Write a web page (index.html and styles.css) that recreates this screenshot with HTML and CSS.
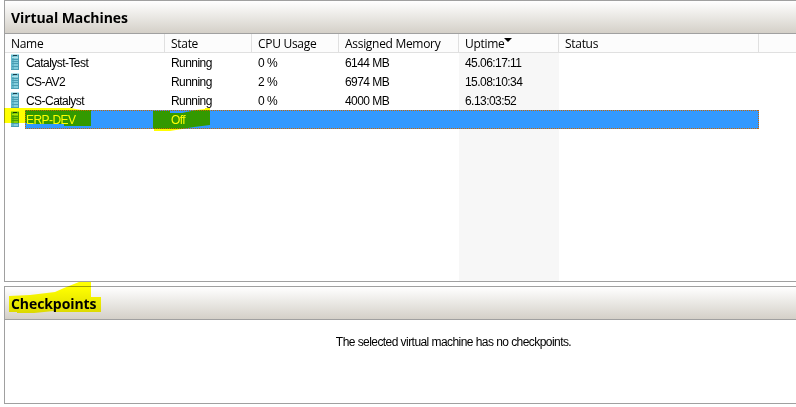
FILE: index.html
```html
<!DOCTYPE html>
<html lang="en">
<head>
  <meta charset="UTF-8">
  <title>Virtual Machines</title>
  <meta name="viewport" content="width=device-width, initial-scale=1">
  <link rel="stylesheet" href="styles.css">
</head>
<body>

  <!-- Server icon, reused by every row -->
  <svg class="sprite" width="0" height="0" aria-hidden="true">
    <symbol id="server" viewBox="0 0 8 16">
      <path fill="#62b8cb" d="M0 0h8v16H0z"/>
      <path fill="#83cddb" d="M3 2h4v13H3z"/>
      <path fill="#4a9db3" d="M7 1h1v15H7zM0 15h8v1H0z"/>
      <path fill="#b5e2ea" d="M0 0h8v1H0zM1 3h6v1H1z"/>
      <path fill="#4a9db3" d="M1 5h6v1H1zM1 7h6v1H1zM1 9h6v1H1zM1 12h6v1H1z"/>
      <path fill="#163c4c" d="M2 1h4v1H2z"/>
    </symbol>
  </svg>

  <section class="panel panel-machines">
    <h2 class="panel-title">Virtual Machines</h2>
    <div class="list">
      <div class="row row-head">
        <span class="cell">Name</span>
        <span class="cell">State</span>
        <span class="cell">CPU Usage</span>
        <span class="cell">Assigned Memory</span>
        <span class="cell">Uptime<i class="sort-arrow"></i></span>
        <span class="cell">Status</span>
      </div>
      <div class="row">
        <span class="cell cell-name"><svg class="icon"><use href="#server"/></svg>Catalyst-Test</span>
        <span class="cell">Running</span>
        <span class="cell">0 %</span>
        <span class="cell">6144 MB</span>
        <span class="cell">45.06:17:11</span>
      </div>
      <div class="row">
        <span class="cell cell-name"><svg class="icon"><use href="#server"/></svg>CS-AV2</span>
        <span class="cell">Running</span>
        <span class="cell">2 %</span>
        <span class="cell">6974 MB</span>
        <span class="cell">15.08:10:34</span>
      </div>
      <div class="row">
        <span class="cell cell-name"><svg class="icon"><use href="#server"/></svg>CS-Catalyst</span>
        <span class="cell">Running</span>
        <span class="cell">0 %</span>
        <span class="cell">4000 MB</span>
        <span class="cell">6.13:03:52</span>
      </div>
      <div class="row is-selected">
        <span class="cell cell-name"><svg class="icon"><use href="#server"/></svg>ERP-DEV</span>
        <span class="cell">Off</span>
      </div>
    </div>
  </section>

  <section class="panel panel-checkpoints">
    <h2 class="panel-title">Checkpoints</h2>
    <p class="message">The selected virtual machine has no checkpoints.</p>
  </section>

  <!-- Marker strokes over the list -->
  <svg class="marker" viewBox="0 0 796 407" aria-hidden="true">
    <path d="M4 108H70L82 110H91V126H64V124H27V123H4z"/>
    <path d="M153 111H170V113H182L196 110L205 109V108H210V125L194 127L170 131H154V128H153z"/>
    <path d="M9 296L30 295L55 292L64 288L79 282H91V297H101V312H54V311L34 313H17V312H9z"/>
  </svg>

</body>
</html>
```

FILE: styles.css
```css
* {
  box-sizing: border-box;
}

body {
  position: relative;
  display: flex;
  flex-direction: column;
  gap: 4px;
  height: 407px;
  margin: 0;
  padding-left: 4px;
  overflow: hidden;
  background-color: #fff;
  color: #000;
  font: 12px/19px "Open Sans", "Noto Sans", sans-serif;
}

.sprite {
  position: absolute;
}

.panel {
  display: flex;
  flex-direction: column;
  border: 1px solid #a0a0a0;
  border-right: 0;
}
.panel-machines {
  height: 282px;
}
.panel-checkpoints {
  height: 118px;
}

.panel-title {
  flex: none;
  height: 33px;
  margin: 0;
  padding-left: 6px;
  border-bottom: 1px solid #a0a0a0;
  background: linear-gradient(to bottom, #fff, #d4d0c8);
  font-size: 14px;
  letter-spacing: -.08px;
  line-height: 33px;
}

/* The sorted column is shaded down to the bottom of the list */
.list {
  flex: 1;
  background: linear-gradient(#f7f7f7, #f7f7f7) 454px 19px / 100px 100% no-repeat;
}

.row {
  display: grid;
  grid-template-columns: 160px 87px 87px 120px 100px 200px;
  height: 19px;
  font-family: "Liberation Sans", Arial, sans-serif;
  letter-spacing: -.55px;
  line-height: 21px;
}
.row-head {
  border-bottom: 1px solid #e0e0e0;
  background-color: #fcfcfc;
  font-family: "Open Sans", "Noto Sans", sans-serif;
  letter-spacing: -.3px;
  line-height: 19px;
}

.cell {
  padding-left: 6px;
  white-space: nowrap;
}
.row-head .cell {
  border-right: 1px solid #e0e0e0;
}

.cell-name {
  display: flex;
}
.icon {
  width: 8px;
  height: 16px;
  margin: 1px 7px 0 0;
}

.sort-arrow {
  display: inline-block;
  border: 4px solid transparent;
  border-top-color: #000;
  border-bottom: 0;
  vertical-align: 6px;
}

.is-selected {
  position: relative;
  width: 754px;
  background: linear-gradient(#39f, #39f) 20px 0 no-repeat;
  color: #fff;
}
/* Focus rectangle, one pixel on and one off, leaves the icon out */
.is-selected::after {
  content: "";
  position: absolute;
  top: 0;
  right: 0;
  bottom: 0;
  left: 20px;
  background:
    linear-gradient(to right, #c60 50%, transparent 50%) 0 0 / 2px 1px repeat-x,
    linear-gradient(to right, #c60 50%, transparent 50%) 0 100% / 2px 1px repeat-x,
    linear-gradient(to bottom, #c60 50%, transparent 50%) 0 0 / 1px 2px repeat-y,
    linear-gradient(to bottom, #c60 50%, transparent 50%) 100% 0 / 1px 2px repeat-y;
}

.message {
  margin: 13px 0 0;
  padding-left: 106px;
  font-family: "Liberation Sans", Arial, sans-serif;
  letter-spacing: -.56px;
  text-align: center;
}

.marker {
  position: absolute;
  top: 0;
  left: 0;
  width: 796px;
  height: 407px;
  fill: #ff0;
  mix-blend-mode: multiply;
}
```
